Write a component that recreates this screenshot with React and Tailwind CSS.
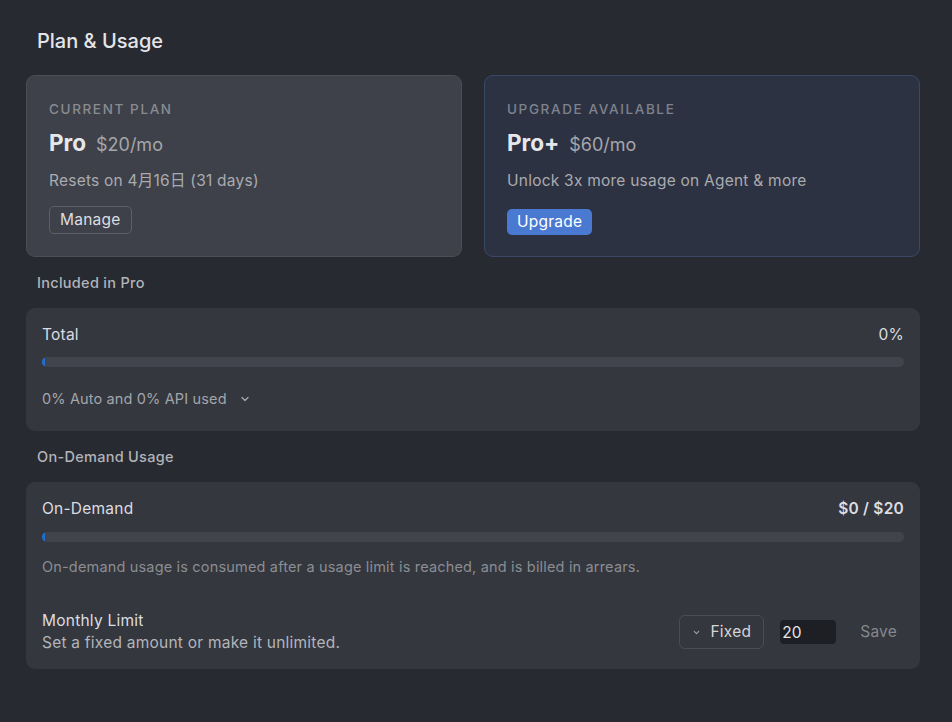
import React, { useState } from 'react';

const font = { fontFamily: 'Inter, "Noto Sans CJK JP", sans-serif' };

// Thin usage bar with a sliver of blue at the start
const UsageBar = () => (
  <div className="h-[10px] w-full rounded-full bg-[#41444c] overflow-hidden">
    <div className="h-full w-[3px] rounded-full bg-[#1f6fd1]" />
  </div>
);

const Chevron = ({ className }) => (
  <svg viewBox="0 0 12 12" className={className} fill="none" stroke="currentColor" strokeWidth="1.4" strokeLinecap="round" strokeLinejoin="round">
    <path d="M3 4.5 6 7.5 9 4.5" />
  </svg>
);

const PlanUsage = () => {
  const [limit, setLimit] = useState('20');

  return (
    <div className="min-h-[722px] w-full bg-[#272a31] pl-[26px] pr-[32px] pt-[27px] text-[#dcdde0]" style={font}>
      {/* Title */}
      <h1 className="pl-[11px] text-[20px] leading-[28px] font-medium text-[#e4e5e8]">Plan &amp; Usage</h1>

      {/* Plan cards */}
      <div className="mt-[20px] grid grid-cols-2 gap-[22px]">
        <div className="h-[182px] rounded-[9px] border border-[#4b4e56] bg-[#3e4149] px-[22px] pt-[24px]">
          <div className="text-[13.5px] leading-[18px] tracking-[0.12em] font-medium text-[#898b91]">CURRENT PLAN</div>
          <div className="mt-[10px] flex items-baseline gap-[10px]">
            <span className="text-[22.5px] leading-[30px] font-bold text-[#e6e7ea]">Pro</span>
            <span className="text-[18px] text-[#a4a6ab]">$20/mo</span>
          </div>
          <div className="mt-[13px] text-[15.5px] leading-[20px] tracking-[0.015em] text-[#a9abb0]">Resets on 4月16日 (31 days)</div>
          <button className="mt-[15px] flex h-[28px] items-center rounded-[5px] border border-[#5c5f66] px-[10px] text-[15.5px] leading-[20px] tracking-[0.015em] text-[#dcdde0]">Manage</button>
        </div>

        <div className="h-[182px] rounded-[9px] border border-[#3a4868] bg-[#2d3242] px-[22px] pt-[24px]">
          <div className="text-[13.5px] leading-[18px] tracking-[0.12em] font-medium text-[#7e828d]">UPGRADE AVAILABLE</div>
          <div className="mt-[10px] flex items-baseline gap-[10px]">
            <span className="text-[22.5px] leading-[30px] font-bold text-[#e6e7ea]">Pro+</span>
            <span className="text-[18px] text-[#a4a6ab]">$60/mo</span>
          </div>
          <div className="mt-[13px] text-[15.5px] leading-[20px] tracking-[0.015em] text-[#a9abb0]">Unlock 3x more usage on Agent &amp; more</div>
          <button className="mt-[18px] flex h-[26px] items-center rounded-[5px] bg-[#4a79d2] px-[10px] text-[15.5px] leading-[20px] tracking-[0.015em] text-white">Upgrade</button>
        </div>
      </div>

      {/* Included usage */}
      <div className="mt-[16px] pl-[11px] text-[14.5px] leading-[20px] tracking-[0.02em] font-medium text-[#b2b4b9]">Included in Pro</div>
      <div className="mt-[15px] rounded-[9px] bg-[#34373e] px-[16px] pt-[17px] pb-[22px]">
        <div className="flex items-center justify-between text-[15.5px] leading-[20px] tracking-[0.015em] text-[#dcdde0]">
          <span>Total</span>
          <span>0%</span>
        </div>
        <div className="mt-[12px]">
          <UsageBar />
        </div>
        <button className="mt-[22px] flex items-center gap-[12px] text-[14.5px] leading-[20px] tracking-[0.01em] text-[#a3a5ab]">
          0% Auto and 0% API used
          <Chevron className="h-[12px] w-[12px] text-[#a3a5ab]" />
        </button>
      </div>

      {/* On-demand usage */}
      <div className="mt-[16px] pl-[11px] text-[14.5px] leading-[20px] tracking-[0.02em] font-medium text-[#b2b4b9]">On-Demand Usage</div>
      <div className="mt-[15px] rounded-[9px] bg-[#34373e] px-[16px] pt-[17px] pb-[15px]">
        <div className="flex items-center justify-between text-[15.5px] leading-[20px] tracking-[0.015em] text-[#dcdde0]">
          <span>On-Demand</span>
          <span className="font-semibold">$0 / $20</span>
        </div>
        <div className="mt-[13px]">
          <UsageBar />
        </div>
        <p className="mt-[15px] text-[14.5px] leading-[20px] tracking-[0.012em] text-[#8b8d93]">
          On-demand usage is consumed after a usage limit is reached, and is billed in arrears.
        </p>
        <div className="mt-[33px] flex items-center justify-between">
          <div>
            <div className="text-[15.5px] leading-[22px] tracking-[0.015em] text-[#dcdde0]">Monthly Limit</div>
            <div className="text-[15.5px] leading-[22px] tracking-[0.015em] text-[#b3b5ba]">Set a fixed amount or make it unlimited.</div>
          </div>
          <div className="flex items-center">
            <button className="flex h-[34px] items-center gap-[9px] rounded-[6px] border border-[#4a4d55] pl-[12px] pr-[12px] text-[15.5px] tracking-[0.015em] text-[#d4d5d8]">
              <Chevron className="h-[9px] w-[9px] text-[#a3a5ab]" />
              Fixed
            </button>
            <input
              value={limit}
              onChange={(e) => setLimit(e.target.value)}
              className="ml-[16px] h-[24px] w-[56px] rounded-[4px] bg-[#1e1f24] px-[2px] text-[15.5px] text-[#e4e5e8] outline-none"
            />
            <button className="ml-[24px] mr-[7px] text-[15.5px] tracking-[0.015em] text-[#85878d]">Save</button>
          </div>
        </div>
      </div>
    </div>
  );
};

export default function App() {
  return <PlanUsage />;
}
